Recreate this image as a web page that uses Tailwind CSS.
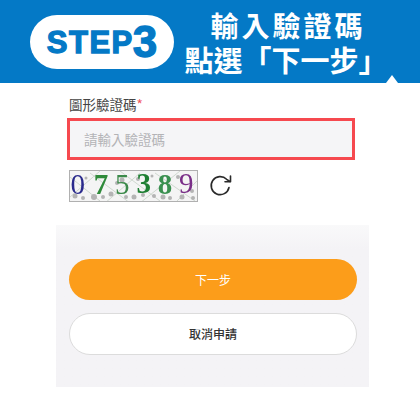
<!DOCTYPE html>
<html lang="zh-Hant">
<head>
    <meta charset="UTF-8">
    <title>STEP 3</title>
    <script src="https://cdn.jsdelivr.net/npm/@tailwindcss/browser@4"></script>
</head>
<body class="bg-white w-[420px] h-[400px] overflow-hidden font-['Noto_Sans_CJK_TC',sans-serif]">

    <!-- Header -->
    <header class="relative bg-[#0479c6] h-[83px] flex items-center pl-[30px]">
        <div class="w-[144px] h-[54px] bg-white rounded-full flex items-center justify-center text-[#0479c6] font-['Liberation_Sans',sans-serif] font-bold [-webkit-text-stroke:1.3px_#0479c6]">
            <span class="text-[31px] leading-none tracking-[1.5px] mt-[1px]">STEP</span><span class="text-[44px] leading-none -ml-[1px]">3</span>
        </div>
        <div class="w-[204px] ml-[10px] text-white font-bold text-center">
            <div class="text-[28px] leading-[34px] tracking-[3px] pl-[4px]">輸入驗證碼</div>
            <div class="text-[29px] leading-[34px] whitespace-nowrap">點選「下一步」</div>
        </div>
        <div class="absolute left-[386px] bottom-0 w-0 h-0 border-x-[6px] border-x-transparent border-b-[8px] border-b-white"></div>
    </header>

    <!-- Form -->
    <main class="w-[313px] ml-[56px]">
        <div class="pl-[13px] pt-[12px] h-[142px]">
            <label class="block text-[13.5px] leading-[18px] text-[#444444]">圖形驗證碼<span class="text-[#f0555a]">*</span></label>
            <div class="w-[288px] h-[42px] -ml-[2px] mt-[5px] border-[3px] border-[#f6494f] bg-[#f5f5f7] flex items-center pl-[14px] text-[13.5px] text-[#b3b3b6]">請輸入驗證碼</div>
            <div class="flex items-center mt-[10px]">
                <div class="relative w-[129px] h-[32px] border border-[#b0b0b0] bg-[#f4f4f4]">
                    <svg class="absolute inset-0 blur-[0.6px]" width="127" height="30" viewBox="0 0 127 30">
                        <g stroke="#cfd8cf" stroke-width="1" fill="none">
                            <path d="M0 6L30 30M20 2L60 32M50 0L90 30M85 2L125 30M30 0L0 26M70 2L35 32M110 0L70 32M129 8L105 32"/>
                        </g>
                        <g fill="#b4b4b4">
                            <circle cx="5" cy="25" r="2.5"/><circle cx="13" cy="27" r="2"/><circle cx="24" cy="26" r="3"/><circle cx="33" cy="26" r="2"/>
                            <circle cx="41" cy="23" r="2.5"/><circle cx="47" cy="12" r="2"/><circle cx="52" cy="9" r="2.5"/><circle cx="56" cy="26" r="2"/>
                            <circle cx="64" cy="26" r="2.5"/><circle cx="73" cy="24" r="2"/><circle cx="68" cy="8" r="2"/><circle cx="84" cy="25" r="2"/>
                            <circle cx="93" cy="26" r="2.5"/><circle cx="100" cy="27" r="2"/><circle cx="108" cy="6" r="2"/><circle cx="112" cy="26" r="2.5"/>
                            <circle cx="122" cy="20" r="2"/><circle cx="123" cy="27" r="2"/><circle cx="16" cy="7" r="1.5"/><circle cx="82" cy="5" r="1.5"/>
                        </g>
                    </svg>
                    <div class="absolute inset-0 flex font-['Liberation_Serif',serif] text-[29px] leading-[26px] blur-[0.3px]">
                        <span class="w-[22px] -ml-[3px] text-center text-[#2a2a8c]">0</span>
                        <span class="w-[22px] ml-[2px] text-center font-bold text-[#2f8a3a]">7</span>
                        <span class="w-[22px] text-center text-[#3c8a4a]">5</span>
                        <span class="w-[22px] -mt-[1px] text-center font-bold text-[#1f7f33]">3</span>
                        <span class="w-[22px] text-center font-bold text-[#3a9050]">8</span>
                        <span class="w-[22px] -mt-[1px] text-center text-[#7a2f88]">9</span>
                    </div>
                </div>
                <svg class="ml-[11px]" width="24" height="24" viewBox="0 0 24 24" fill="none" stroke="#2a2a2a" stroke-width="1.6" stroke-linecap="round" stroke-linejoin="round">
                    <path d="M20 13.5A9 9 0 1 1 17.6 5.3L21 7.5"/>
                    <path d="M21.5 2V7.8H16"/>
                </svg>
            </div>
        </div>

        <!-- Buttons -->
        <div class="bg-linear-to-b from-[#f9f9fa] to-[#f4f3f6] to-[24px] h-[162px] px-[13px] pt-[34px]">
            <button class="block w-[288px] h-[41px] rounded-full bg-[#fc9d1a] text-white text-[12px]">下一步</button>
            <button class="block w-[288px] h-[42px] mt-[13px] rounded-full bg-white border border-[#dcdcdc] text-[#333333] text-[12px] font-medium">取消申請</button>
        </div>
    </main>
</body>
</html>
